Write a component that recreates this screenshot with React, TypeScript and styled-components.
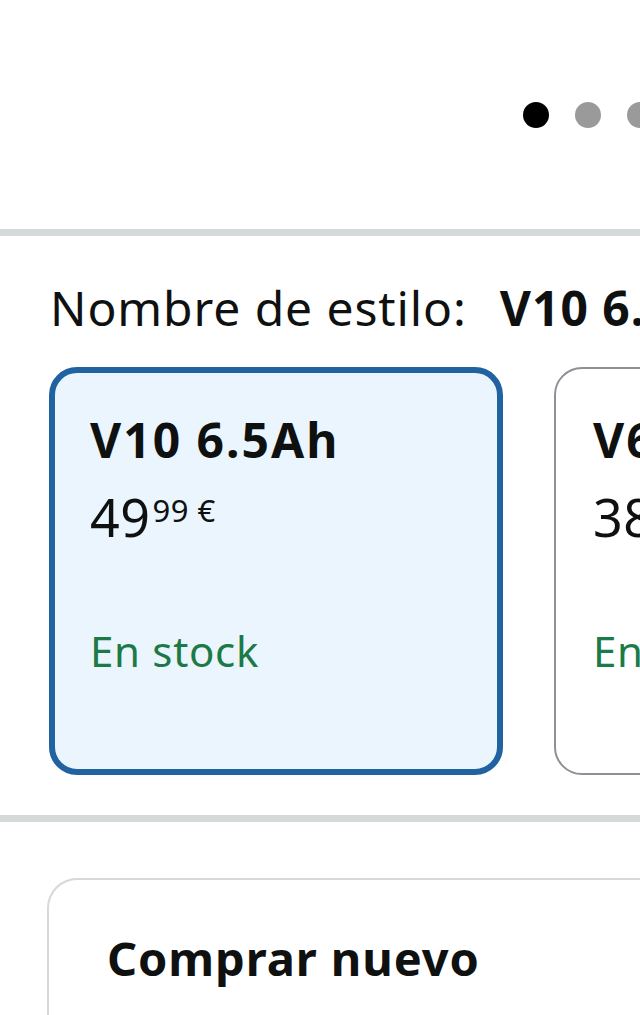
import styled, { createGlobalStyle } from 'styled-components';

const GlobalStyle = createGlobalStyle`
  html, body {
    margin: 0;
    padding: 0;
    background: #ffffff;
  }
  body {
    font-family: 'Noto Sans', 'Open Sans', Arial, sans-serif;
    color: #0f1111;
    overflow: hidden;
  }
`;

const Page = styled.div`
  width: 640px;
  height: 1015px;
  overflow: hidden;
`;

const Top = styled.div`
  height: 229px;
`;

const Dots = styled.div`
  display: flex;
  gap: 26px;
  padding: 102px 0 0 523px;
`;

const Dot = styled.span<{ $active?: boolean }>`
  flex: none;
  width: 26px;
  height: 26px;
  border-radius: 50%;
  background: ${(p) => (p.$active ? '#000000' : '#9a9a9a')};
`;

const Divider = styled.div`
  height: 7px;
  background: #d5d9d9;
`;

const StyleSection = styled.section`
  padding: 44px 0 40px 49px;
`;

const Label = styled.div`
  font-size: 48px;
  line-height: 56px;
  letter-spacing: 0.9px;
  white-space: nowrap;
  margin-left: 1px;
`;

const LabelValue = styled.span`
  font-weight: 700;
  margin-left: 33px;
  letter-spacing: 1px;
`;

const Swatches = styled.div`
  display: flex;
  gap: 51px;
  margin-top: 31px;
`;

const Swatch = styled.div<{ $selected?: boolean }>`
  flex: none;
  box-sizing: border-box;
  width: 454px;
  height: 408px;
  border-radius: 28px;
  border: ${(p) => (p.$selected ? '6px solid #2162a1' : '2px solid #8d9096')};
  background: ${(p) => (p.$selected ? '#ebf5fe' : '#ffffff')};
  padding: ${(p) => (p.$selected ? '39px 0 0 35px' : '43px 0 0 37px')};
  white-space: nowrap;
`;

const SwatchTitle = styled.div`
  font-size: 48px;
  line-height: 56px;
  font-weight: 700;
  letter-spacing: 2px;
`;

const Price = styled.div`
  display: flex;
  align-items: flex-start;
  margin-top: 19px;
  line-height: 60px;
`;

const PriceWhole = styled.span`
  font-size: 52px;
  letter-spacing: 0.5px;
`;

const PriceFraction = styled.span`
  font-size: 31px;
  line-height: 31px;
  margin-top: 8px;
  margin-left: 2px;
  letter-spacing: 0.5px;
`;

const Stock = styled.div`
  margin-top: 79px;
  font-size: 42px;
  line-height: 50px;
  letter-spacing: 0.7px;
  color: #1b7a45;
`;

const BuySection = styled.section`
  padding: 56px 0 0 47px;
`;

const BuyBox = styled.div`
  box-sizing: border-box;
  width: 640px;
  height: 200px;
  border: 2px solid #d5d9d9;
  border-right: none;
  border-radius: 30px 0 0 0;
  padding: 50px 0 0 58px;
`;

const BuyTitle = styled.h2`
  margin: 0;
  font-size: 47px;
  line-height: 56px;
  font-weight: 700;
  letter-spacing: 0.9px;
`;

const swatches = [
  { name: 'V10 6.5Ah', whole: '49', fraction: '99 €', selected: true },
  { name: 'V6 4.0Ah', whole: '38', fraction: '99 €', selected: false },
];

export default function App() {
  return (
    <Page>
      <GlobalStyle />
      <Top>
        <Dots>
          <Dot $active />
          <Dot />
          <Dot />
        </Dots>
      </Top>
      <Divider />
      <StyleSection>
        <Label>
          Nombre de estilo:<LabelValue>V10 6.5Ah</LabelValue>
        </Label>
        <Swatches>
          {swatches.map((s) => (
            <Swatch key={s.name} $selected={s.selected}>
              <SwatchTitle>{s.name}</SwatchTitle>
              <Price>
                <PriceWhole>{s.whole}</PriceWhole>
                <PriceFraction>{s.fraction}</PriceFraction>
              </Price>
              <Stock>En stock</Stock>
            </Swatch>
          ))}
        </Swatches>
      </StyleSection>
      <Divider />
      <BuySection>
        <BuyBox>
          <BuyTitle>Comprar nuevo</BuyTitle>
        </BuyBox>
      </BuySection>
    </Page>
  );
}
